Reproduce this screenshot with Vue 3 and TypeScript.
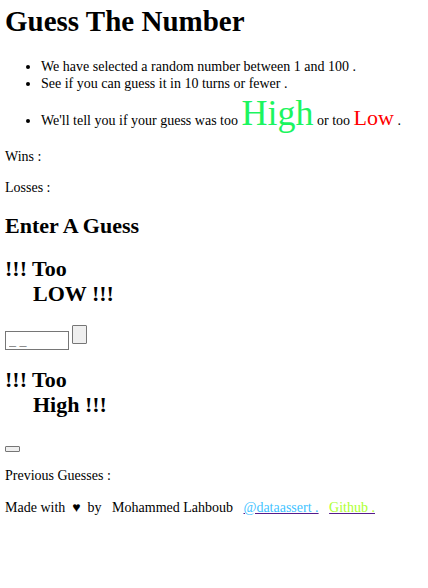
<script setup lang="ts">
import { ref } from 'vue'

const guess = ref('')
const wins = ref('')
const losses = ref('')
const previous = ref<number[]>([])
</script>

<template>
  <main class="page">
    <h1>Guess The Number</h1>
    <ul>
      <li>We have selected a random number between 1 and 100 .</li>
      <li>See if you can guess it in 10 turns or fewer .</li>
      <li>
        We'll tell you if your guess was too <span class="high">High</span> or too
        <span class="low">Low</span> .
      </li>
    </ul>
    <p>Wins : {{ wins }}</p>
    <p>Losses : {{ losses }}</p>
    <h2 class="title"><label for="guess">Enter A Guess</label></h2>
    <h2>!!! Too<br /><span class="second">LOW !!!</span></h2>
    <form class="entry" @submit.prevent>
      <input id="guess" v-model="guess" type="text" placeholder="_ _" />
      <button class="submit" type="submit" aria-label="Submit guess"></button>
    </form>
    <h2>!!! Too<br /><span class="second">High !!!</span></h2>
    <button class="restart" type="button" aria-label="Restart"></button>
    <p>Previous Guesses : {{ previous.join(' ') }}</p>
    <footer>
      Made with&nbsp; ♥ &nbsp;by &nbsp; Mohammed Lahboub &nbsp;
      <a href="#"><span class="handle">@dataassert .</span></a> &nbsp;
      <a href="#"><span class="github">Github .</span></a>
    </footer>
  </main>
</template>

<style>
body {
  margin: 0;
  background: #fff;
}
</style>

<style scoped>
.page {
  padding: 4px 5px;
  color: #000;
  font-family: "Liberation Serif", serif;
  font-size: 14px;
  line-height: 17px;
}

h1 {
  margin: 0 0 20px;
  font-size: 29px;
  line-height: 34px;
}

ul {
  margin: 0 0 14px;
  padding-left: 36px;
}

.high {
  color: #1cf55f;
  font-size: 36px;
  line-height: 42px;
}

.low {
  color: #f00;
  font-size: 22px;
}

p {
  margin: 0 0 14px;
}

h2 {
  margin: 0 0 18px;
  font-size: 22px;
  line-height: 25px;
}

.title {
  margin-top: 17px;
}

.second {
  margin-left: 28px;
}

.entry {
  display: flex;
  align-items: flex-start;
  gap: 3px;
  margin-top: 19px;
  margin-bottom: 17px;
}

input {
  box-sizing: border-box;
  width: 64px;
  height: 19px;
  margin-top: 6px;
  padding: 1px 3px;
  border: 1px solid #767676;
  font: 14px "Liberation Serif", serif;
}

button {
  display: block;
  box-sizing: border-box;
  width: 15px;
  padding: 0;
  border: 1px solid #767676;
  border-radius: 1px;
  background: #efefef;
}

.submit {
  height: 19px;
}

.restart {
  height: 6px;
  margin-top: 29px;
  margin-bottom: 15px;
}

footer {
  margin-top: 15px;
}

a {
  color: #551a8b;
}

.handle {
  color: #3fc3ff;
}

.github {
  color: #adff2f;
}
</style>
